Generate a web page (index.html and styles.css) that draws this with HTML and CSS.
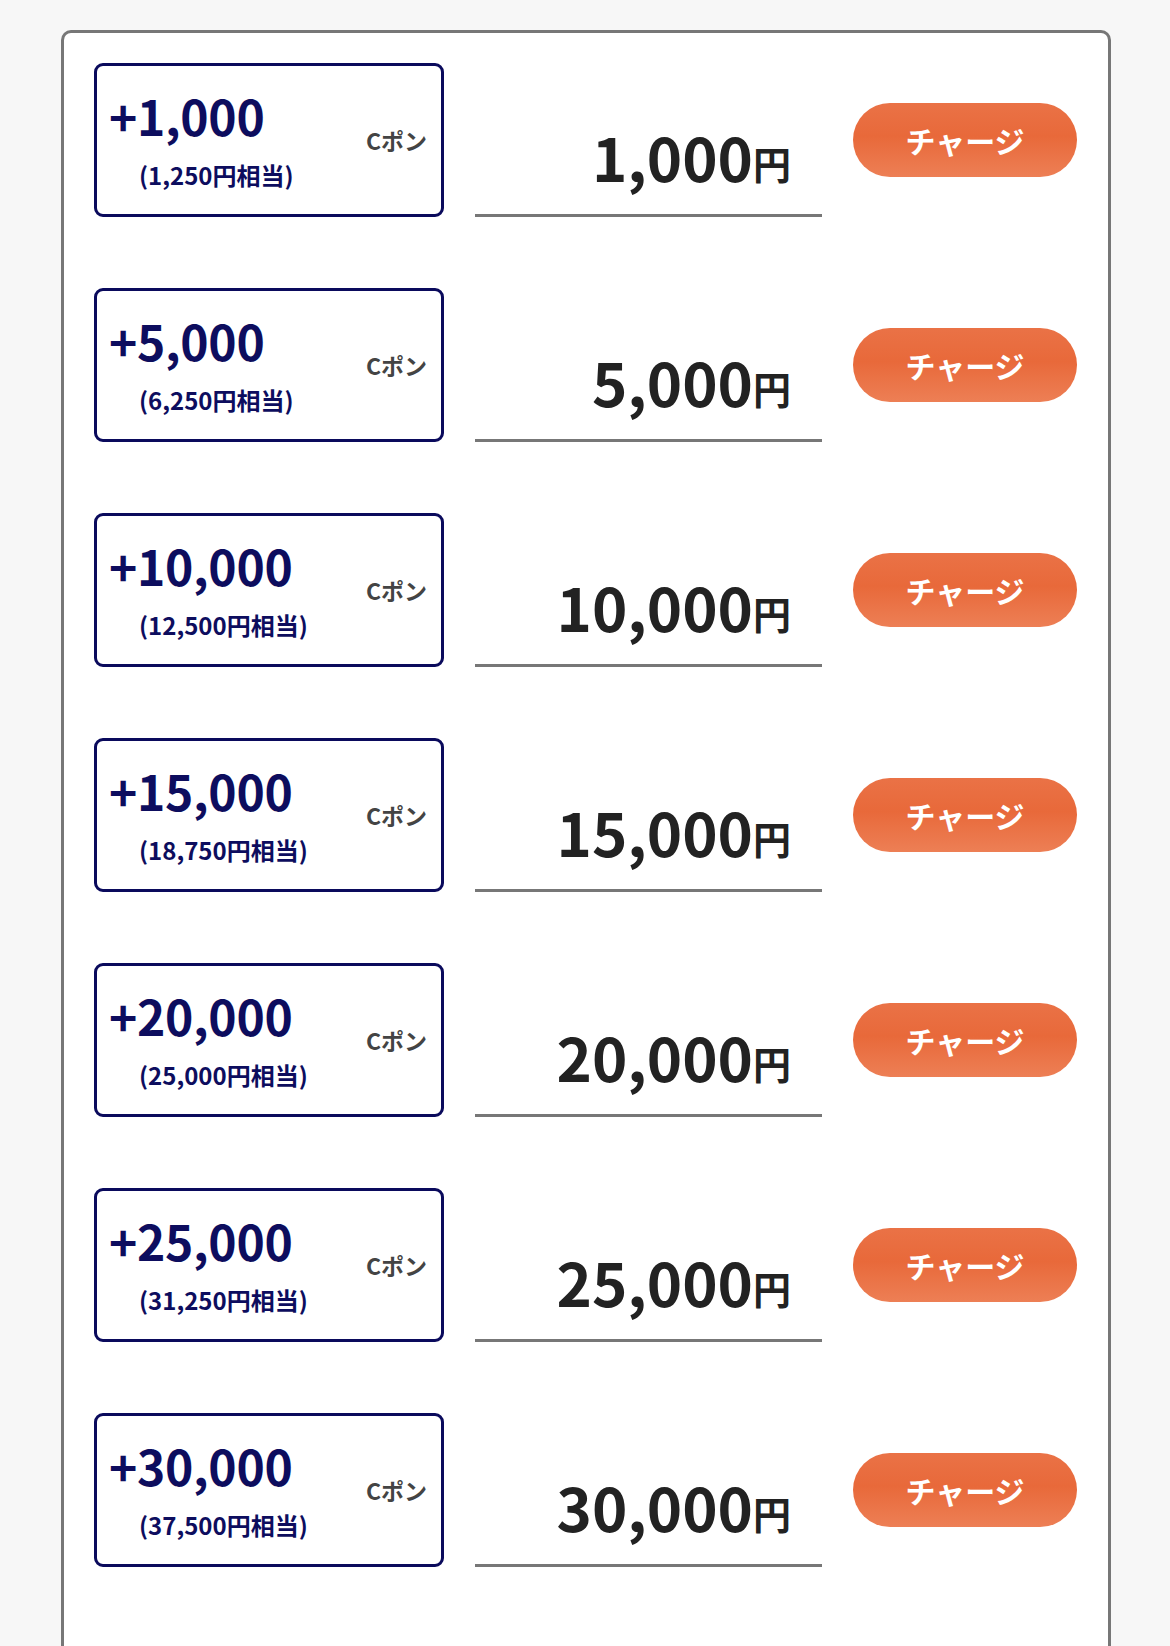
FILE: index.html
```html
<!DOCTYPE html>
<html lang="ja">
<head>
<meta charset="utf-8">
<link rel="stylesheet" href="styles.css">
</head>
<body>
<div class="panel">
  <div class="row">
    <div class="point-box">
      <div class="point-main">
        <div class="point-num">+1,000</div>
        <div class="point-sub">(1,250円相当)</div>
      </div>
      <div class="point-unit">Cポン</div>
    </div>
    <div class="price"><span class="price-num">1,000</span><span class="price-yen">円</span></div>
    <div class="btn-wrap"><button class="charge-btn">チャージ</button></div>
  </div>
  <div class="row">
    <div class="point-box">
      <div class="point-main">
        <div class="point-num">+5,000</div>
        <div class="point-sub">(6,250円相当)</div>
      </div>
      <div class="point-unit">Cポン</div>
    </div>
    <div class="price"><span class="price-num">5,000</span><span class="price-yen">円</span></div>
    <div class="btn-wrap"><button class="charge-btn">チャージ</button></div>
  </div>
  <div class="row">
    <div class="point-box">
      <div class="point-main">
        <div class="point-num">+10,000</div>
        <div class="point-sub">(12,500円相当)</div>
      </div>
      <div class="point-unit">Cポン</div>
    </div>
    <div class="price"><span class="price-num">10,000</span><span class="price-yen">円</span></div>
    <div class="btn-wrap"><button class="charge-btn">チャージ</button></div>
  </div>
  <div class="row">
    <div class="point-box">
      <div class="point-main">
        <div class="point-num">+15,000</div>
        <div class="point-sub">(18,750円相当)</div>
      </div>
      <div class="point-unit">Cポン</div>
    </div>
    <div class="price"><span class="price-num">15,000</span><span class="price-yen">円</span></div>
    <div class="btn-wrap"><button class="charge-btn">チャージ</button></div>
  </div>
  <div class="row">
    <div class="point-box">
      <div class="point-main">
        <div class="point-num">+20,000</div>
        <div class="point-sub">(25,000円相当)</div>
      </div>
      <div class="point-unit">Cポン</div>
    </div>
    <div class="price"><span class="price-num">20,000</span><span class="price-yen">円</span></div>
    <div class="btn-wrap"><button class="charge-btn">チャージ</button></div>
  </div>
  <div class="row">
    <div class="point-box">
      <div class="point-main">
        <div class="point-num">+25,000</div>
        <div class="point-sub">(31,250円相当)</div>
      </div>
      <div class="point-unit">Cポン</div>
    </div>
    <div class="price"><span class="price-num">25,000</span><span class="price-yen">円</span></div>
    <div class="btn-wrap"><button class="charge-btn">チャージ</button></div>
  </div>
  <div class="row">
    <div class="point-box">
      <div class="point-main">
        <div class="point-num">+30,000</div>
        <div class="point-sub">(37,500円相当)</div>
      </div>
      <div class="point-unit">Cポン</div>
    </div>
    <div class="price"><span class="price-num">30,000</span><span class="price-yen">円</span></div>
    <div class="btn-wrap"><button class="charge-btn">チャージ</button></div>
  </div>
</div>
</body>
</html>
```

FILE: styles.css
```css
html, body {
  margin: 0;
  padding: 0;
  background: #f7f7f7;
  font-family: "Noto Sans CJK JP", "Noto Sans", sans-serif;
}
body {
  padding: 30px 59px 0 61px;
  height: 1646px;
  box-sizing: border-box;
  overflow: hidden;
}
.panel {
  background: #fff;
  border: 3px solid #777;
  border-bottom: none;
  border-radius: 10px 10px 0 0;
  padding: 30px 28px 60px 30px;
  display: flex;
  flex-direction: column;
  gap: 71px;
  min-height: 1700px;
  box-sizing: border-box;
}
.row {
  display: flex;
  align-items: center;
  height: 154px;
}
.point-box {
  width: 350px;
  height: 154px;
  box-sizing: border-box;
  border: 3px solid #0a0a5c;
  border-radius: 9px;
  display: flex;
  align-items: center;
  justify-content: space-between;
  padding: 0 14px 0 12px;
}
.point-main {
  display: flex;
  flex-direction: column;
  margin-top: -2px;
}
.point-num {
  color: #0d0d5e;
  font-size: 48px;
  font-weight: 700;
  line-height: 52px;
  letter-spacing: -0.3px;
}
.point-sub {
  color: #0d0d5e;
  font-size: 24px;
  font-weight: 700;
  line-height: 28px;
  padding-left: 30px;
  margin-top: 20px;
}
.point-unit {
  color: #444;
  font-size: 23px;
  font-weight: 700;
  line-height: 28px;
}
.price {
  width: 347px;
  height: 154px;
  margin-left: 31px;
  box-sizing: border-box;
  border-bottom: 3px solid #777;
  display: flex;
  align-items: flex-end;
  justify-content: flex-end;
  padding: 0 31px 28px 0;
  color: #222;
  font-weight: 700;
}
.price-num {
  font-size: 60px;
  line-height: 60px;
}
.price-yen {
  font-size: 38px;
  line-height: 46px;
}
.btn-wrap {
  margin-left: 31px;
  display: flex;
  align-items: center;
}
.charge-btn {
  width: 224px;
  height: 74px;
  border: none;
  border-radius: 37px;
  background: linear-gradient(180deg, #ea7246 0%, #e8693a 45%, #ed7f55 100%);
  color: #fff;
  font-family: "Noto Sans CJK JP", "Noto Sans", sans-serif;
  font-size: 30px;
  font-weight: 700;
  padding: 0;
  margin: 0;
}
```
